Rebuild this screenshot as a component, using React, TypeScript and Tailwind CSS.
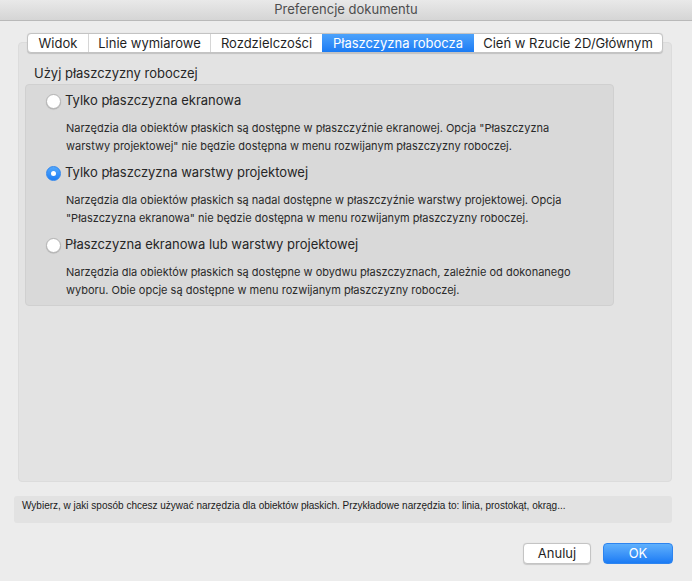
import React from "react";

const tabs = ["Widok", "Linie wymiarowe", "Rozdzielczości", "Płaszczyzna robocza", "Cień w Rzucie 2D/Głównym"];
const tabW = [61, 122, 112, 152, 188];

const options = [
  {
    label: "Tylko płaszczyzna ekranowa",
    checked: false,
    desc: [
      'Narzędzia dla obiektów płaskich są dostępne w płaszczyźnie ekranowej. Opcja "Płaszczyzna',
      'warstwy projektowej" nie będzie dostępna w menu rozwijanym płaszczyzny roboczej.',
    ],
  },
  {
    label: "Tylko płaszczyzna warstwy projektowej",
    checked: true,
    desc: [
      "Narzędzia dla obiektów płaskich są nadal dostępne w płaszczyźnie warstwy projektowej. Opcja",
      '"Płaszczyzna ekranowa" nie będzie dostępna w menu rozwijanym płaszczyzny roboczej.',
    ],
  },
  {
    label: "Płaszczyzna ekranowa lub warstwy projektowej",
    checked: false,
    desc: [
      "Narzędzia dla obiektów płaskich są dostępne w obydwu płaszczyznach, zależnie od dokonanego",
      "wyboru. Obie opcje są dostępne w menu rozwijanym płaszczyzny roboczej.",
    ],
  },
];

function Radio({ checked }: { checked: boolean }) {
  if (checked) {
    return (
      <div className="w-[15px] h-[15px] rounded-full bg-gradient-to-b from-[#52a7fb] to-[#1b7df5] border border-[#2f86ef] flex items-center justify-center shrink-0">
        <div className="w-[5px] h-[5px] rounded-full bg-white" />
      </div>
    );
  }
  return (
    <div className="w-[15px] h-[15px] rounded-full bg-white border border-[#b5b5b5] shadow-[0_0.5px_1px_rgba(0,0,0,0.2)] shrink-0" />
  );
}

export default function App() {
  return (
    <div
      className="w-[692px] h-[581px] bg-[#ececec] flex flex-col text-[#262626] overflow-hidden"
      style={{ fontFamily: "Inter, 'Noto Sans', sans-serif" }}
    >
      {/* title bar */}
      <div className="h-[21px] bg-gradient-to-b from-[#e9e9e9] to-[#d5d5d5] border-b border-[#b9b9b9] flex items-center justify-center text-[13px] text-[#4d4d4d] shrink-0">
        Preferencje dokumentu
      </div>

      {/* tab area */}
      <div className="relative mt-[21px] mx-[18px] mr-[20px] h-[440px] bg-[#e3e3e3] border border-[#dcdcdc] rounded-[4px] flex flex-col">
        <div className="absolute -top-[10px] left-0 right-0 flex justify-center">
          <div className="flex h-[20px] bg-white border border-[#c3c3c3] rounded-[4px] shadow-[0_0.5px_1px_rgba(0,0,0,0.15)] overflow-hidden">
            {tabs.map((t, i) => (
              <div
                key={t}
                style={{ width: tabW[i] - (i === 0 ? 1 : 0) }}
                className={
                  "flex items-center justify-center text-[13px] leading-none " +
                  (i === 3
                    ? "bg-gradient-to-b from-[#4ca2fb] to-[#1a7bf4] text-white"
                    : "text-[#1f1f1f]") +
                  (i > 0 && i !== 3 && i !== 4 ? " border-l border-[#d6d6d6]" : "")
                }
              >
                {t}
              </div>
            ))}
          </div>
        </div>

        <div className="pt-[22px] pl-[15px] text-[13px] leading-[16px] text-[#262626]">
          Użyj płaszczyzny roboczej
        </div>

        <div className="mt-[3px] ml-[6px] w-[589px] h-[222px] bg-[#d9d9d9] border border-[#d0d0d0] rounded-[4px] flex flex-col pt-[7px] pl-[20px]">
          {options.map((o, i) => (
            <div key={i} className={"flex flex-col " + (i === 0 ? "" : "mt-[9px]")}>
              <div className="flex items-center gap-[4px] h-[18px] text-[13px] text-[#262626]">
                <Radio checked={o.checked} />
                <span>{o.label}</span>
              </div>
              <div className="mt-[9px] pl-[20px] text-[11px] leading-[18px] text-[#2a2a2a]">
                {o.desc.map((d, j) => (
                  <div key={j}>{d}</div>
                ))}
              </div>
            </div>
          ))}
        </div>
      </div>

      {/* help box */}
      <div
        className="mt-[14px] ml-[14px] w-[658px] h-[27px] bg-[#e2e2e2] rounded-[3px] flex items-start pt-[2px] pl-[8px] text-[10px] text-[#1a1a1a]"
        style={{ fontFamily: "'Liberation Sans', Arial, sans-serif" }}
      >
        Wybierz, w jaki sposób chcesz używać narzędzia dla obiektów płaskich. Przykładowe narzędzia to: linia, prostokąt, okrąg...
      </div>

      {/* buttons */}
      <div className="mt-[20px] flex justify-end gap-[12px] pr-[19px]">
        <div className="w-[68px] h-[21px] bg-white border border-[#c4c4c4] rounded-[4px] shadow-[0_0.5px_1px_rgba(0,0,0,0.15)] flex items-center justify-center text-[13px] text-[#1f1f1f]">
          Anuluj
        </div>
        <div className="w-[70px] h-[21px] bg-gradient-to-b from-[#5fb0fc] to-[#1a7bf4] rounded-[4px] border border-[#2d84ef] flex items-center justify-center text-[13px] text-white">
          OK
        </div>
      </div>
    </div>
  );
}
